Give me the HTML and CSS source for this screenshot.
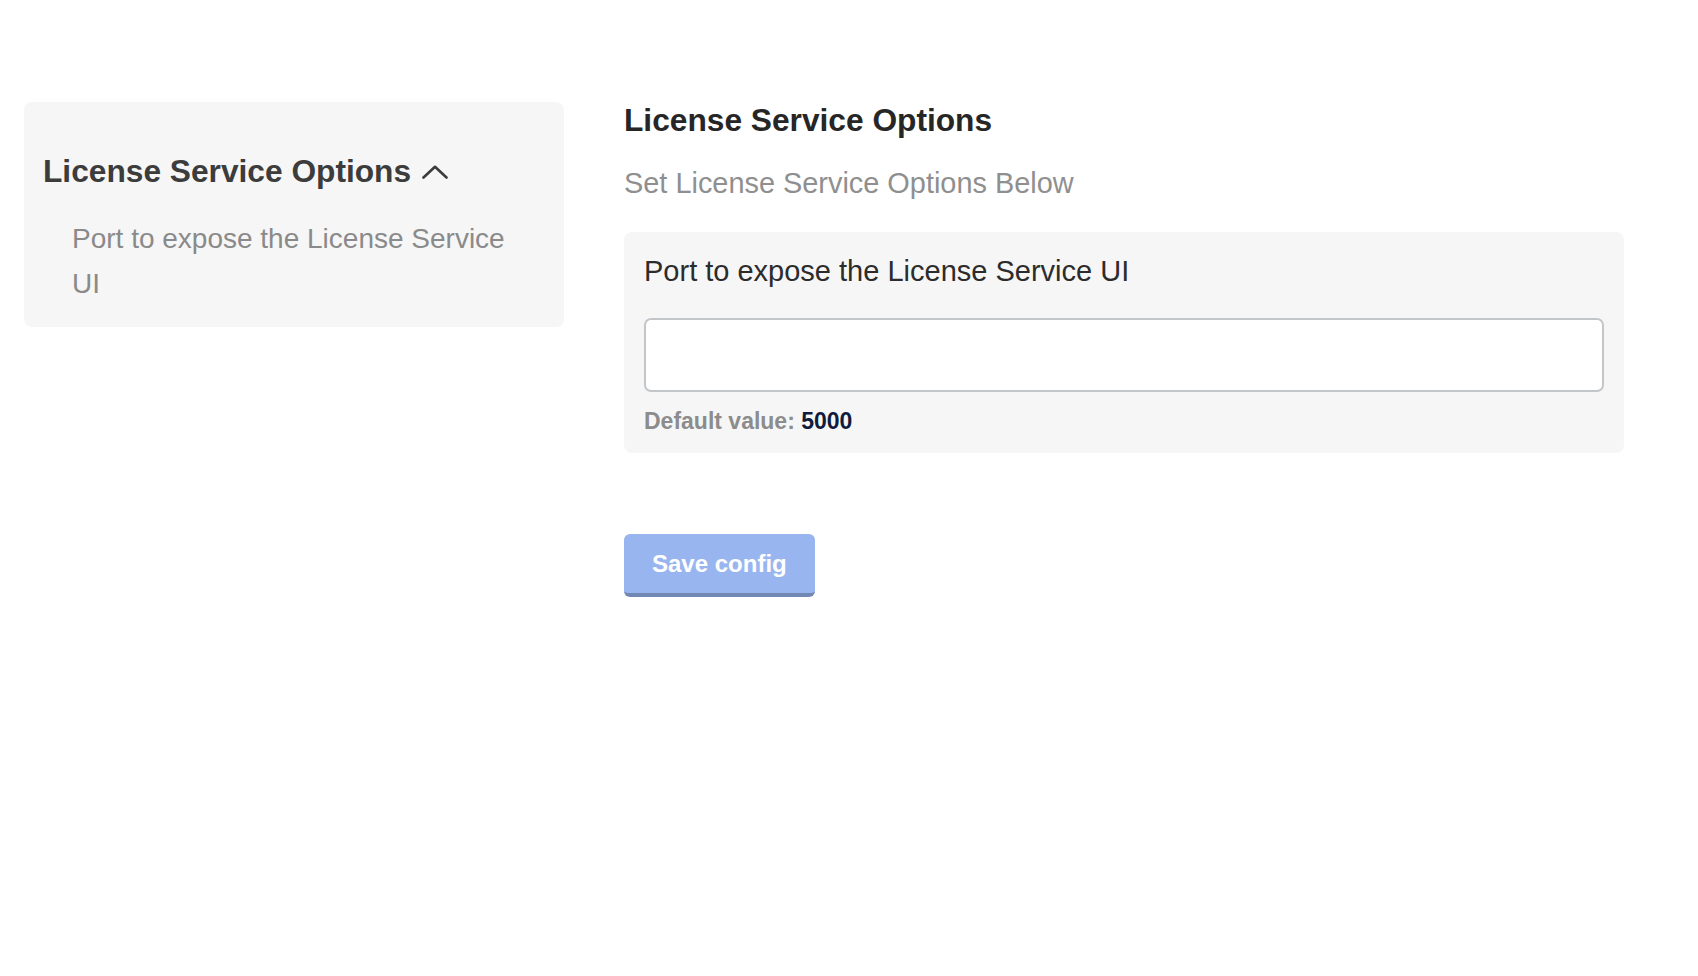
FILE: index.html
```html
<!DOCTYPE html>
<html lang="en">
<head>
<meta charset="utf-8">
<title>License Service Options</title>
<link rel="stylesheet" href="styles.css">
</head>
<body>
<div class="page">
  <aside class="sidebar">
    <div class="side-title">
      <span>License Service Options</span>
      <svg class="chev" width="26" height="14" viewBox="0 0 26 14"><polyline points="1.5,12.5 13,1.8 24.5,12.5" fill="none" stroke="#3c3c3c" stroke-width="2.6" stroke-linecap="round" stroke-linejoin="round"/></svg>
    </div>
    <div class="side-item">Port to expose the License Service UI</div>
  </aside>
  <main class="main">
    <h1 class="heading">License Service Options</h1>
    <p class="subtitle">Set License Service Options Below</p>
    <div class="card">
      <label class="field-label">Port to expose the License Service UI</label>
      <input class="field-input" type="text">
      <div class="default"><span class="default-key">Default value:</span> <span class="default-val">5000</span></div>
    </div>
    <button class="save">Save config</button>
  </main>
</div>
</body>
</html>
```

FILE: styles.css
```css
* { box-sizing: border-box; }
html, body { margin: 0; padding: 0; background: #ffffff; }
body { font-family: "Liberation Sans", Arial, Helvetica, sans-serif; }

.page {
  display: flex;
  align-items: flex-start;
  gap: 60px;
  padding: 102px 74px 0 24px;
}

.sidebar {
  width: 540px;
  flex: 0 0 540px;
  background: #f6f6f6;
  border-radius: 8px;
  padding: 50px 40px 21px 19px;
}
.side-title {
  display: flex;
  align-items: center;
  gap: 11px;
  font-size: 31.7px;
  line-height: 38px;
  font-weight: bold;
  color: #3c3c3c;
  white-space: nowrap;
}
.chev { margin-top: 2px; }
.side-item {
  margin-top: 26px;
  padding-left: 29px;
  font-size: 28px;
  line-height: 45px;
  color: #8a8a8a;
}

.main {
  flex: 1;
  display: flex;
  flex-direction: column;
  align-items: flex-start;
}
.heading {
  margin: -1px 0 0 0;
  font-size: 31.7px;
  line-height: 38px;
  font-weight: bold;
  color: #262626;
}
.subtitle {
  margin: 27px 0 0 0;
  font-size: 28.9px;
  line-height: 34px;
  color: #8f8f8f;
}
.card {
  align-self: stretch;
  margin-top: 32px;
  background: #f6f6f6;
  border-radius: 8px;
  padding: 22px 20px 18px 20px;
  display: flex;
  flex-direction: column;
}
.field-label {
  font-size: 29px;
  line-height: 35px;
  color: #2c2c2c;
}
.field-input {
  margin-top: 29px;
  height: 74px;
  width: 100%;
  border: 2px solid #c3c6c9;
  border-radius: 7px;
  background: #ffffff;
  font-family: inherit;
  font-size: 24px;
  padding: 0 16px;
  outline: none;
}
.default {
  margin-top: 16px;
  font-size: 23px;
  line-height: 27px;
  font-weight: bold;
}
.default-key { color: #8c8c8c; }
.default-val { color: #0f1c3d; }

.save {
  margin-top: 81px;
  height: 63px;
  padding: 0 28px;
  border: none;
  border-bottom: 4px solid #7187b4;
  border-radius: 6px;
  background: #99b5ef;
  color: #ffffff;
  font-family: inherit;
  font-size: 24px;
  font-weight: bold;
  line-height: 59px;
  cursor: pointer;
}
```
